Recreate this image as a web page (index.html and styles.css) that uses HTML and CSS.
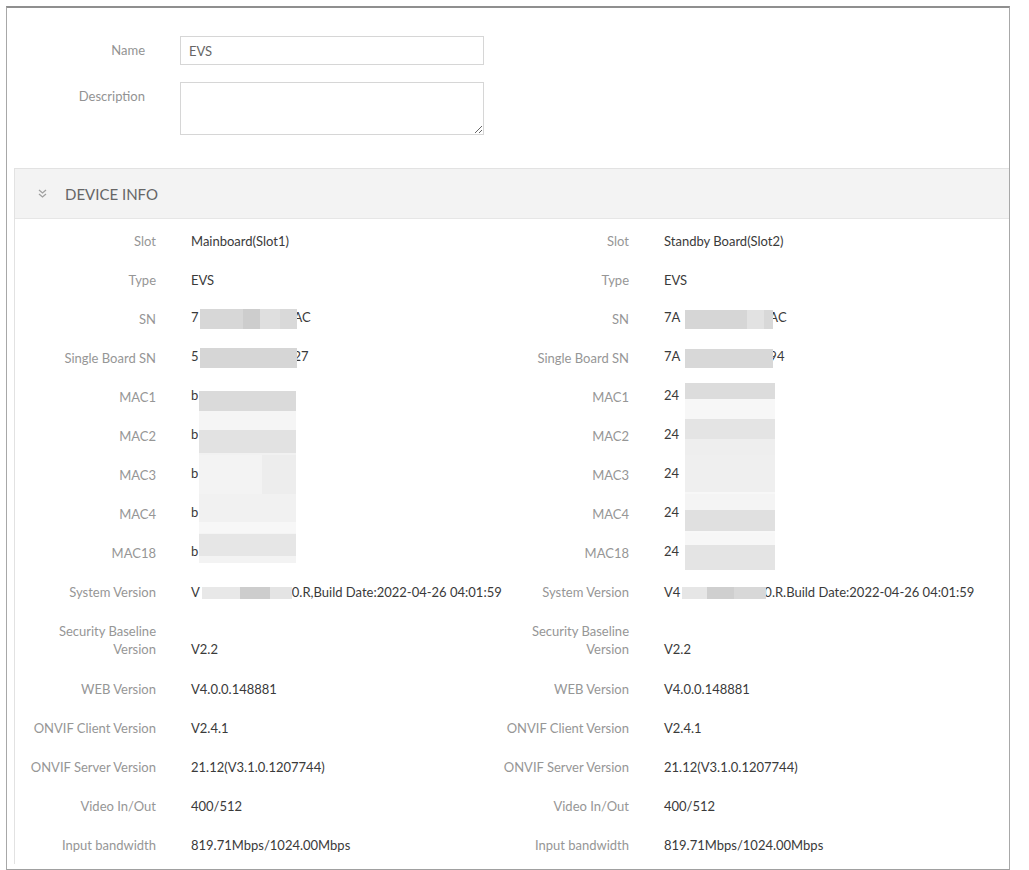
FILE: index.html
```html
<!DOCTYPE html>
<html lang="en">
<head>
    <meta charset="UTF-8">
    <meta name="viewport" content="width=device-width, initial-scale=1.0">
    <title>Device Info</title>
    <link rel="stylesheet" href="styles.css">
</head>
<body>
    <div class="frame">
        <div class="form">
            <div class="form-row">
                <label class="form-label" for="name">Name</label>
                <input type="text" id="name" class="text-input" value="EVS">
            </div>
            <div class="form-row">
                <label class="form-label" for="desc">Description</label>
                <textarea id="desc" class="text-area"></textarea>
            </div>
        </div>

        <div class="panel">
            <div class="panel-head">
                <svg class="chevron" width="9" height="9" viewBox="0 0 9 9">
                    <path d="M1 1 L4.5 4 L8 1 M1 5 L4.5 8 L8 5" fill="none" stroke="#a0a0a0" stroke-width="1.3"/>
                </svg>
                <span class="panel-title">DEVICE INFO</span>
            </div>

            <div class="boards">
                <!-- main board -->
                <div class="board">
                    <div class="field"><span class="label">Slot</span><span class="value">Mainboard(Slot1)</span></div>
                    <div class="field"><span class="label">Type</span><span class="value">EVS</span></div>
                    <div class="field"><span class="label">SN</span><span class="value">7<span class="mask sn-l"></span>AC</span></div>
                    <div class="field"><span class="label">Single Board SN</span><span class="value">5<span class="mask sbsn-l"></span>27</span></div>
                    <div class="field"><span class="label">MAC1</span><span class="value">b<span class="mask mac-l l1"></span></span></div>
                    <div class="field"><span class="label">MAC2</span><span class="value">b<span class="mask mac-l l2"></span></span></div>
                    <div class="field"><span class="label">MAC3</span><span class="value">b<span class="mask mac-l l3"></span></span></div>
                    <div class="field"><span class="label">MAC4</span><span class="value">b<span class="mask mac-l l4"></span></span></div>
                    <div class="field"><span class="label">MAC18</span><span class="value">b<span class="mask mac-l l5"></span></span></div>
                    <div class="field"><span class="label">System Version</span><span class="value">V<span class="mask ver-l"></span>0.R,Build Date:2022-04-26 04:01:59</span></div>
                    <div class="field tall"><span class="label">Security Baseline<br>Version</span><span class="value">V2.2</span></div>
                    <div class="field"><span class="label">WEB Version</span><span class="value">V4.0.0.148881</span></div>
                    <div class="field"><span class="label">ONVIF Client Version</span><span class="value">V2.4.1</span></div>
                    <div class="field"><span class="label">ONVIF Server Version</span><span class="value">21.12(V3.1.0.1207744)</span></div>
                    <div class="field"><span class="label">Video In/Out</span><span class="value">400/512</span></div>
                    <div class="field"><span class="label">Input bandwidth</span><span class="value">819.71Mbps/1024.00Mbps</span></div>
                </div>

                <!-- standby board -->
                <div class="board">
                    <div class="field"><span class="label">Slot</span><span class="value">Standby Board(Slot2)</span></div>
                    <div class="field"><span class="label">Type</span><span class="value">EVS</span></div>
                    <div class="field"><span class="label">SN</span><span class="value">7A<span class="mask sn-r"></span>AC</span></div>
                    <div class="field"><span class="label">Single Board SN</span><span class="value">7A<span class="mask sbsn-r"></span>94</span></div>
                    <div class="field"><span class="label">MAC1</span><span class="value">24<span class="mask mac-r r1"></span></span></div>
                    <div class="field"><span class="label">MAC2</span><span class="value">24<span class="mask mac-r r2"></span></span></div>
                    <div class="field"><span class="label">MAC3</span><span class="value">24<span class="mask mac-r r3"></span></span></div>
                    <div class="field"><span class="label">MAC4</span><span class="value">24<span class="mask mac-r r4"></span></span></div>
                    <div class="field"><span class="label">MAC18</span><span class="value">24<span class="mask mac-r r5"></span></span></div>
                    <div class="field"><span class="label">System Version</span><span class="value">V4<span class="mask ver-r"></span>0.R.Build Date:2022-04-26 04:01:59</span></div>
                    <div class="field tall"><span class="label">Security Baseline<br>Version</span><span class="value">V2.2</span></div>
                    <div class="field"><span class="label">WEB Version</span><span class="value">V4.0.0.148881</span></div>
                    <div class="field"><span class="label">ONVIF Client Version</span><span class="value">V2.4.1</span></div>
                    <div class="field"><span class="label">ONVIF Server Version</span><span class="value">21.12(V3.1.0.1207744)</span></div>
                    <div class="field"><span class="label">Video In/Out</span><span class="value">400/512</span></div>
                    <div class="field"><span class="label">Input bandwidth</span><span class="value">819.71Mbps/1024.00Mbps</span></div>
                </div>
            </div>
        </div>
    </div>
</body>
</html>
```

FILE: styles.css
```css
body {
    margin: 0;
    background: #fff;
    font-family: Lato, "Open Sans", Arial, sans-serif;
    font-size: 13px;
}
.frame {
    margin: 6px 0 0 6px;
    width: 1002px;
    height: 861px;
    border-top: 2px solid #8f8f8f;
    border-left: 1px solid #a8a8a8;
    border-right: 1px solid #a8a8a8;
    border-bottom: 1px solid #a0a0a0;
    overflow: hidden;
}
.form {
    padding-top: 28px;
    display: flex;
    flex-direction: column;
    gap: 17px;
}
.form-row {
    display: flex;
    align-items: flex-start;
}
.form-label {
    width: 138px;
    text-align: right;
    line-height: 29px;
    color: #939393;
    margin-right: 35px;
}
.text-input, .text-area {
    box-sizing: border-box;
    width: 304px;
    border: 1px solid #d6d6d6;
    font-family: inherit;
    font-size: 13px;
    color: #666;
    margin: 0;
    padding: 0 8px;
}
.text-input {
    height: 29px;
}
.text-area {
    height: 53px;
    resize: vertical;
}
.panel {
    margin: 33px 0 0 7px;
    border: 1px solid #e2e2e2;
    border-right: none;
    border-bottom: none;
}
.panel-head {
    height: 49px;
    background: #f3f3f3;
    border-bottom: 1px solid #e6e6e6;
    display: flex;
    align-items: center;
    padding-left: 23px;
}
.chevron {
    margin-right: 18px;
}
.panel-title {
    font-size: 15px;
    color: #666;
}
.boards {
    display: flex;
    padding-top: 2px;
}
.board {
    width: 473px;
}
.field {
    display: flex;
    align-items: center;
    height: 39px;
    box-sizing: border-box;
}
.field.tall {
    height: 58px;
    padding: 11px 0;
}
.field.tall .value {
    align-self: flex-end;
}
.label {
    width: 141px;
    flex-shrink: 0;
    text-align: right;
    line-height: 18px;
    color: #969696;
}
.value {
    margin-left: 35px;
    line-height: 18px;
    color: #3a3a3a;
    white-space: nowrap;
}
.mask {
    display: inline-block;
    vertical-align: middle;
    position: relative;
}
.sn-l, .sbsn-l {
    width: 97px;
    height: 20px;
    margin: 0 -3px 0 1px;
}
.sn-l {
    background: linear-gradient(to right, #d7d7d7 0 44%, #cdcdcd 44% 62%, #dfdfdf 62% 82%, #d9d9d9 82%);
}
.sbsn-l {
    background: #d6d6d6;
}
.sn-r, .sbsn-r {
    width: 88px;
    height: 19px;
    margin: 0 -4px 0 5px;
}
.sn-r {
    background: linear-gradient(to right, #d6d6d6 0 70%, #e2e2e2 70% 90%, #d8d8d8 90%);
}
.sbsn-r {
    background: #d8d8d8;
}
.mac-l {
    width: 97px;
    height: 39px;
    margin-left: 1px;
}
.mac-r {
    width: 90px;
    height: 39px;
    margin-left: 6px;
}
.l1 { background: linear-gradient(to bottom, transparent 0 14px, #dadada 14px 34px, #f5f5f5 34px); }
.l2 { background: linear-gradient(to bottom, #f5f5f5 0 14px, #e2e2e2 14px 37px, #f1f1f1 37px); }
.l3 { background: linear-gradient(to right, #f3f3f3 0 65%, #ededed 65%); }
.l4 { background: linear-gradient(to bottom, #f1f1f1 0 28px, #f7f7f7 28px); }
.l5 { background: linear-gradient(to bottom, #f4f4f4 0 1px, #e6e6e6 1px 23px, #f3f3f3 23px 30px, transparent 30px); }
.r1 { background: linear-gradient(to bottom, transparent 0 6px, #dcdcdc 6px 22px, #f7f7f7 22px); }
.r2 { background: linear-gradient(to bottom, #f7f7f7 0 3px, #e4e4e4 3px 23px, #eeeeee 23px); }
.r3 { background: linear-gradient(to bottom, #efefef 0 37px, #f7f7f7 37px); }
.r4 { background: linear-gradient(to bottom, #f4f4f4 0 16px, #e0e0e0 16px 37px, #f8f8f8 37px); }
.r5 { background: linear-gradient(to bottom, #f7f7f7 0 12px, #e4e4e4 12px 37px, transparent 37px); }
.ver-l, .ver-r {
    height: 12px;
    margin-left: 2px;
}
.ver-l {
    width: 90px;
    background: linear-gradient(to right, #e8e8e8 0 42%, #cdcdcd 42% 76%, #e4e4e4 76%);
}
.ver-r {
    width: 84px;
    margin-right: -2px;
    background: linear-gradient(to right, #e6e6e6 0 30%, #cfcfcf 30% 62%, #d8d8d8 62%);
}
```
